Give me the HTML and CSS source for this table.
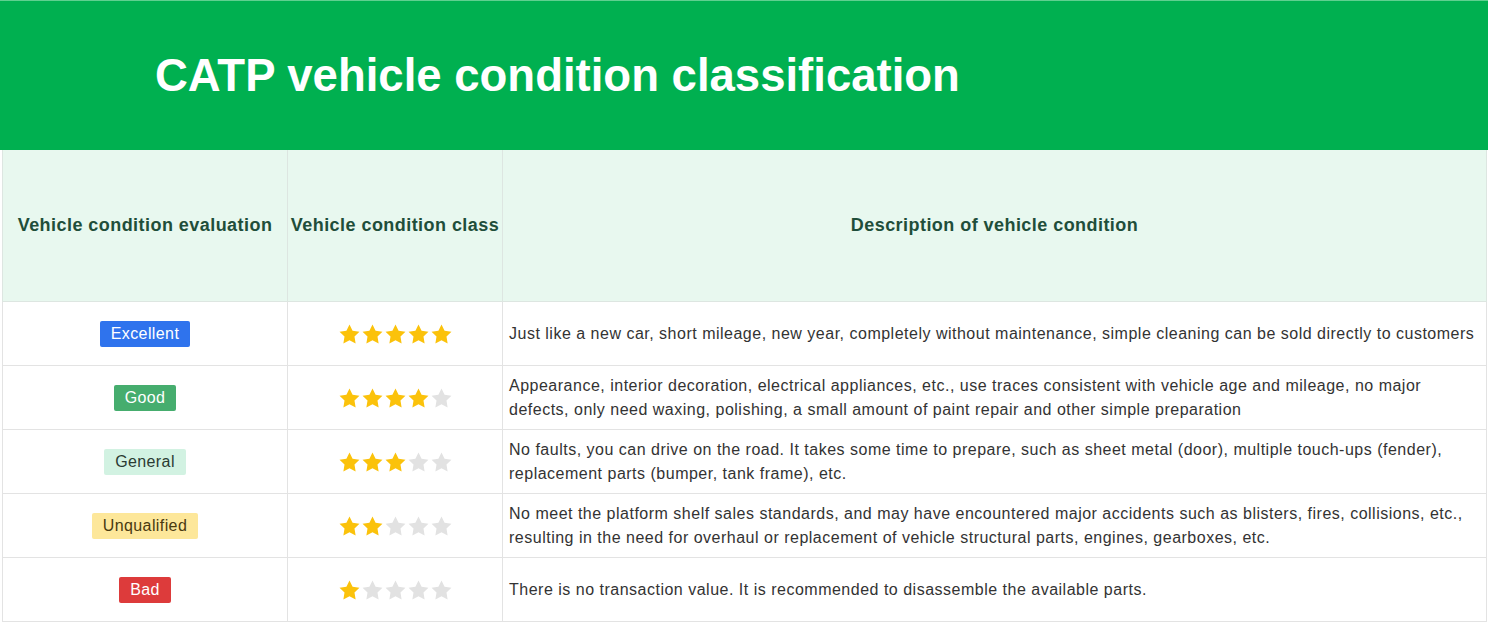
FILE: index.html
```html
<!DOCTYPE html>
<html>
<head>
<meta charset="utf-8">
<link rel="stylesheet" href="styles.css">
</head>
<body>
<svg width="0" height="0" class="defs" aria-hidden="true">
  <defs>
    <symbol id="star" viewBox="0 0 24 24"><path d="M12 1.6l3.2 6.5 7.2 1-5.2 5.1 1.2 7.1L12 17.9l-6.4 3.4 1.2-7.1L1.6 9.1l7.2-1z"/></symbol>
  </defs>
</svg>
<div class="banner"><h1 class="title">CATP vehicle condition classification</h1></div>
<div class="wrap">
<table class="grid">
<colgroup><col class="c1"><col class="c2"><col class="c3"></colgroup>
<thead>
<tr><th>Vehicle condition evaluation</th><th>Vehicle condition class</th><th>Description of vehicle condition</th></tr>
</thead>
<tbody>
<tr>
<td class="mid"><span class="badge b-excellent">Excellent</span></td>
<td class="mid"><span class="stars"><svg class="s on"><use href="#star"/></svg><svg class="s on"><use href="#star"/></svg><svg class="s on"><use href="#star"/></svg><svg class="s on"><use href="#star"/></svg><svg class="s on"><use href="#star"/></svg></span></td>
<td class="desc">Just like a new car, short mileage, new year, completely without maintenance, simple cleaning can be sold directly to customers</td>
</tr>
<tr>
<td class="mid"><span class="badge b-good">Good</span></td>
<td class="mid"><span class="stars"><svg class="s on"><use href="#star"/></svg><svg class="s on"><use href="#star"/></svg><svg class="s on"><use href="#star"/></svg><svg class="s on"><use href="#star"/></svg><svg class="s"><use href="#star"/></svg></span></td>
<td class="desc">Appearance, interior decoration, electrical appliances, etc., use traces consistent with vehicle age and mileage, no major defects, only need waxing, polishing, a small amount of paint repair and other simple preparation</td>
</tr>
<tr>
<td class="mid"><span class="badge b-general">General</span></td>
<td class="mid"><span class="stars"><svg class="s on"><use href="#star"/></svg><svg class="s on"><use href="#star"/></svg><svg class="s on"><use href="#star"/></svg><svg class="s"><use href="#star"/></svg><svg class="s"><use href="#star"/></svg></span></td>
<td class="desc">No faults, you can drive on the road. It takes some time to prepare, such as sheet metal (door), multiple touch-ups (fender), replacement parts (bumper, tank frame), etc.</td>
</tr>
<tr>
<td class="mid"><span class="badge b-unq">Unqualified</span></td>
<td class="mid"><span class="stars"><svg class="s on"><use href="#star"/></svg><svg class="s on"><use href="#star"/></svg><svg class="s"><use href="#star"/></svg><svg class="s"><use href="#star"/></svg><svg class="s"><use href="#star"/></svg></span></td>
<td class="desc">No meet the platform shelf sales standards, and may have encountered major accidents such as blisters, fires, collisions, etc., resulting in the need for overhaul or replacement of vehicle structural parts, engines, gearboxes, etc.</td>
</tr>
<tr>
<td class="mid"><span class="badge b-bad">Bad</span></td>
<td class="mid"><span class="stars"><svg class="s on"><use href="#star"/></svg><svg class="s"><use href="#star"/></svg><svg class="s"><use href="#star"/></svg><svg class="s"><use href="#star"/></svg><svg class="s"><use href="#star"/></svg></span></td>
<td class="desc">There is no transaction value. It is recommended to disassemble the available parts.</td>
</tr>
</tbody>
</table>
</div>
</body>
</html>
```
FILE: styles.css
```css
html, body { margin: 0; padding: 0; background: #fff; }
body { font-family: "Liberation Sans", Arial, sans-serif; color: #333; }
.defs { position: absolute; width: 0; height: 0; overflow: hidden; }
.banner {
  height: 149px;
  background: #00b050;
  border-top: 1px solid #5fd08f;
  display: flex;
  align-items: center;
  padding-left: 155px;
}
.title {
  margin: 0;
  color: #fff;
  font-size: 45.5px;
  font-weight: bold;
  line-height: 1;
}
.wrap { padding: 0 1px 0 2px; }
.grid {
  width: 100%;
  border-collapse: collapse;
  table-layout: fixed;
}
.c1 { width: 285px; }
.c2 { width: 215px; }
.grid th {
  height: 151px;
  background: #e8f8ef;
  color: #1f4e3a;
  font-size: 18px;
  letter-spacing: 0.45px;
  font-weight: bold;
  border: 1px solid #dde6e1;
  border-top: none;
  padding: 0;
  text-align: center;
  white-space: nowrap;
}
.grid td {
  height: 63px;
  border: 1px solid #e3e3e3;
  padding: 0 6px;
  font-size: 16px;
  letter-spacing: 0.5px;
  line-height: 24px;
}
.mid { text-align: center; }
.desc { color: #333; }
.badge {
  display: inline-block;
  font-size: 16px;
  letter-spacing: 0.4px;
  line-height: 26px;
  padding: 0 11px;
  border-radius: 2px;
  vertical-align: middle;
}
.b-excellent { background: #2f73ed; color: #fff; }
.b-good { background: #46ad6e; color: #fff; }
.b-general { background: #d2f2e2; color: #2b3b33; }
.b-unq { background: #fde79a; color: #4a3a10; }
.b-bad { background: #dd3b3b; color: #fff; }
.stars {
  display: inline-flex;
  gap: 0;
  vertical-align: middle;
  position: relative;
  left: 0;
}
.s {
  width: 23px;
  height: 23px;
  fill: #e2e2e2;
}
.s.on { fill: #fbc20b; }
```
